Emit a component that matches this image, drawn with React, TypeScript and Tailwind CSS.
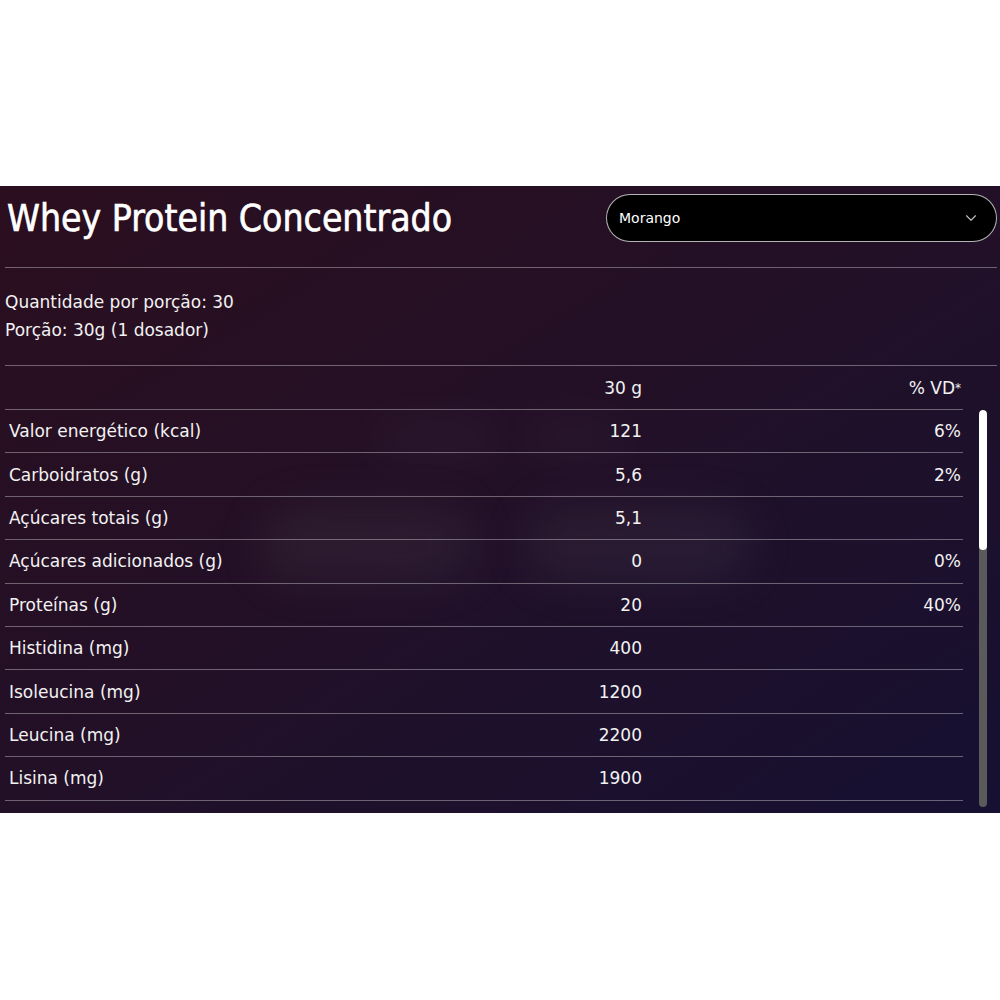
import { ChevronDown } from "lucide-react";

type Row = { label: string; value: string; vd?: string };

const rows: Row[] = [
  { label: "Valor energético (kcal)", value: "121", vd: "6%" },
  { label: "Carboidratos (g)", value: "5,6", vd: "2%" },
  { label: "Açúcares totais (g)", value: "5,1" },
  { label: "Açúcares adicionados (g)", value: "0", vd: "0%" },
  { label: "Proteínas (g)", value: "20", vd: "40%" },
  { label: "Histidina (mg)", value: "400" },
  { label: "Isoleucina (mg)", value: "1200" },
  { label: "Leucina (mg)", value: "2200" },
  { label: "Lisina (mg)", value: "1900" },
];

export default function App() {
  return (
    <div className="min-h-screen bg-white font-['DejaVu_Sans',sans-serif]">
      <div className="h-[186px]" />
      <section className="relative h-[627px] overflow-hidden bg-linear-to-br from-[#2b0e1f] via-[#221027] to-[#161032] pl-[5px] pr-[3px] text-[#f2f2f2]">
        {/* blurred ghosts behind the table */}
        <div className="pointer-events-none absolute left-[370px] top-[232px] h-[40px] w-[130px] rounded-full bg-white/[0.035] blur-xl" />
        <div className="pointer-events-none absolute left-[520px] top-[232px] h-[40px] w-[110px] rounded-full bg-white/[0.03] blur-xl" />
        <div className="pointer-events-none absolute left-[260px] top-[322px] h-[72px] w-[215px] rounded-full bg-[#9a9a9a]/[0.09] blur-xl" />
        <div className="pointer-events-none absolute left-[525px] top-[322px] h-[72px] w-[225px] rounded-full bg-[#9a9a9a]/[0.09] blur-xl" />

        <div className="relative flex items-center justify-between pt-2">
          <h1 className="pl-[2px] font-['DejaVu_Sans_Condensed','DejaVu_Sans',sans-serif] text-[37px] font-normal leading-none text-white [font-stretch:condensed] [-webkit-text-stroke:0.6px_white]">
            Whey Protein Concentrado
          </h1>
          <button className="flex h-12 w-[391px] items-center justify-between rounded-full border border-white/70 bg-black pl-3 pr-4 text-left">
            <span className="text-[14px] text-white">Morango</span>
            <ChevronDown size={18} strokeWidth={1.5} className="text-[#bdbdbd]" />
          </button>
        </div>

        <div className="relative mt-[25px] h-px bg-white/35" />

        <div className="relative pb-[21px] pt-[20px] text-[17px] leading-[28px]">
          <p>Quantidade por porção: 30</p>
          <p>Porção: 30g (1 dosador)</p>
        </div>

        <div className="relative h-px bg-white/35" />

        <div className="relative flex">
          <div className="w-[958px]">
            <div className="grid h-[44px] grid-cols-[1fr_200px_321px] items-center border-b border-white/35 text-[17px] leading-[28px]">
              <span />
              <span className="text-right">30 g</span>
              <span className="pr-[2px] text-right">
                % VD<span className="align-top text-[12px]">*</span>
              </span>
            </div>
            <div>
              {rows.map((r) => (
                <div
                  key={r.label}
                  className="grid h-[43.4px] grid-cols-[1fr_200px_321px] items-center border-b border-white/35 text-[17px] leading-[28px]"
                >
                  <span className="pl-1">{r.label}</span>
                  <span className="text-right">{r.value}</span>
                  <span className="pr-[2px] text-right">{r.vd ?? ""}</span>
                </div>
              ))}
            </div>
          </div>
          <div className="ml-4 flex w-2 flex-col pt-[44px]">
            <div className="flex h-[397px] flex-col overflow-hidden rounded-full bg-[#5a5a5a]">
              <div className="h-[140px] rounded-full bg-white" />
            </div>
          </div>
        </div>
      </section>
    </div>
  );
}
